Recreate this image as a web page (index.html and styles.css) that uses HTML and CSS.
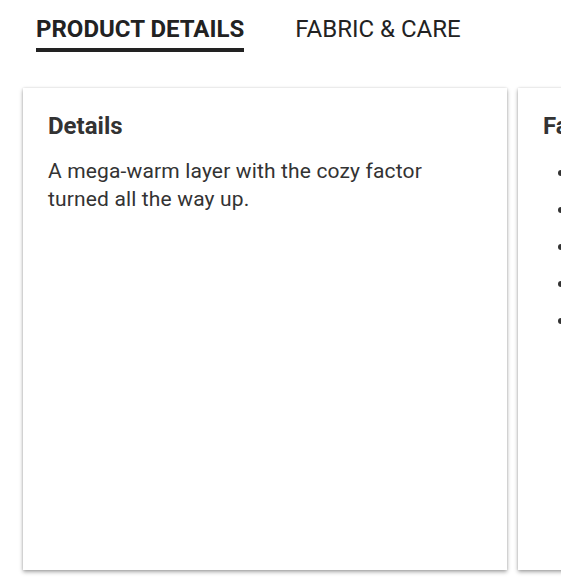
FILE: index.html
```html
<!DOCTYPE html>
<html>
<head>
<meta charset="utf-8">
<link rel="stylesheet" href="styles.css">
</head>
<body>
<nav class="tabs">
  <span class="tab tab-active">PRODUCT DETAILS</span>
  <span class="tab">FABRIC &amp; CARE</span>
</nav>
<div class="viewport">
  <div class="track">
    <section class="card">
      <h2 class="card-title">Details</h2>
      <p class="card-text">A mega-warm layer with the cozy factor turned all the way up.</p>
    </section>
    <section class="card">
      <h2 class="card-title">Fabric &amp; Care</h2>
      <ul class="care-list">
        <li>100% polyester fleece</li>
        <li>Machine wash cold</li>
        <li>Tumble dry low</li>
        <li>Do not bleach</li>
        <li>Imported</li>
      </ul>
    </section>
  </div>
</div>
</body>
</html>
```
FILE: styles.css
```css
* { box-sizing: border-box; }
body {
  margin: 0;
  background: #fff;
  font-family: Roboto, "Liberation Sans", sans-serif;
  color: #333;
}
.tabs {
  display: flex;
  gap: 51px;
  padding: 15px 0 0 36px;
  height: 84px;
}
.tab {
  font-size: 24px;
  line-height: 28px;
  color: #222;
  height: 37px;
}
.tab-active {
  font-weight: 700;
  border-bottom: 4px solid #222;
}
.viewport {
  width: 561px;
  overflow: hidden;
  padding: 4px 0 10px 23px;
}
.track {
  display: flex;
  gap: 11px;
}
.card {
  flex: 0 0 484px;
  height: 482px;
  background: #fff;
  box-shadow: 0 2px 4px rgba(0,0,0,0.35), 0 0 2px rgba(0,0,0,0.12);
  padding: 24px 40px 24px 25px;
}
.card-title {
  margin: 0;
  font-size: 24px;
  font-weight: 700;
  line-height: 28px;
  color: #333;
}
.card-text {
  margin: 17px 0 0;
  font-size: 21px;
  letter-spacing: 0.15px;
  line-height: 28px;
  color: #333;
}
.care-list {
  margin: 14px 0 0;
  padding-left: 34px;
  font-size: 21px;
  line-height: 37px;
  white-space: nowrap;
}
```
